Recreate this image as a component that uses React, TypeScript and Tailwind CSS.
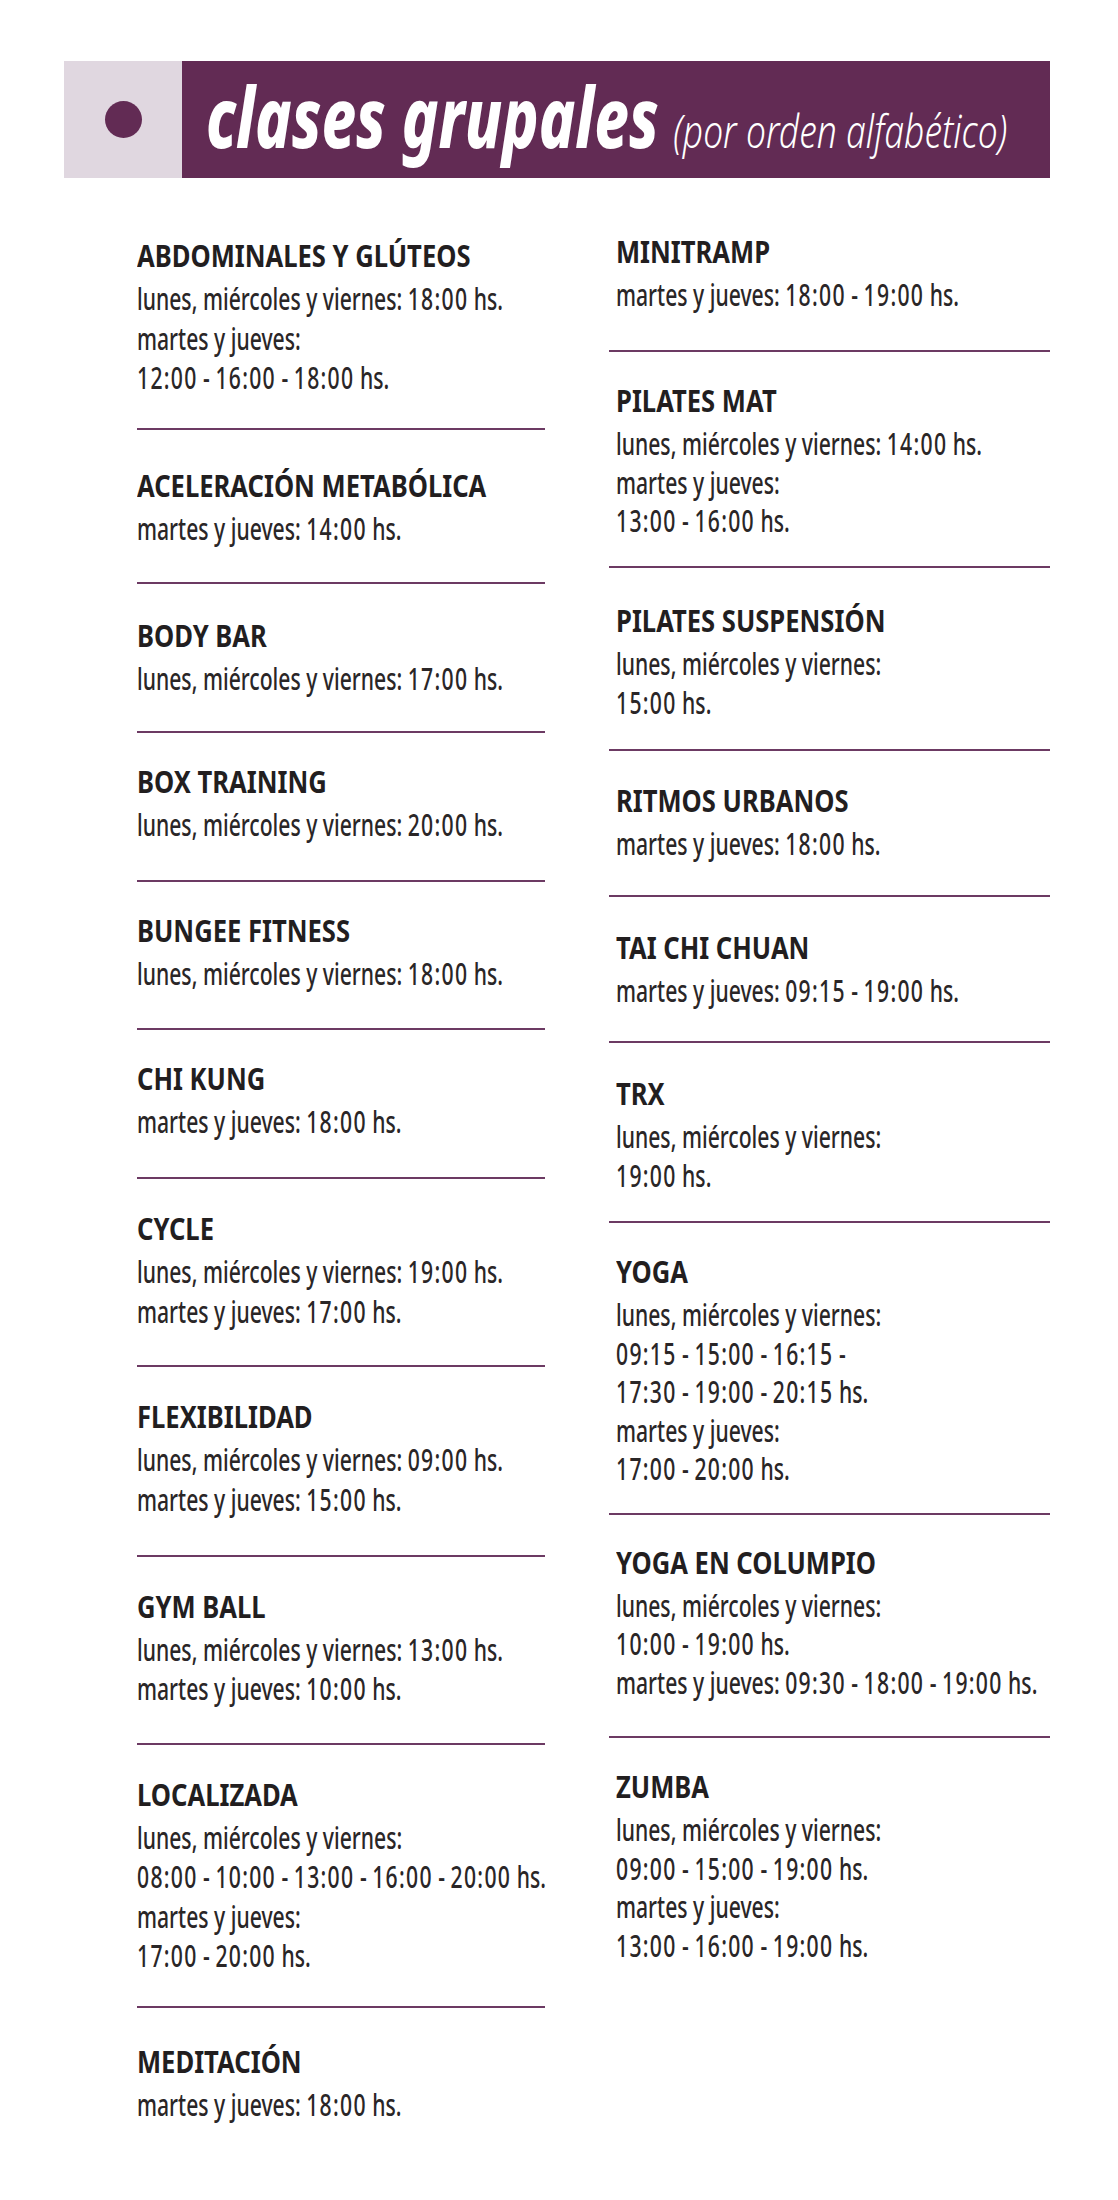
import React from "react";

type Item = { t: string; l: string[]; mt: string; dv?: string };

// left column: titles + schedules, spacing taken from the printed sheet
const leftItems: Item[] = [
  {
    t: "ABDOMINALES Y GLÚTEOS",
    l: ["lunes, miércoles y viernes: 18:00 hs.", "martes y jueves:", "12:00 - 16:00 - 18:00 hs."],
    mt: "mt-[4px]",
    dv: "mt-[30px]",
  },
  { t: "ACELERACIÓN METABÓLICA", l: ["martes y jueves: 14:00 hs."], mt: "mt-[35.5px]", dv: "mt-[33.5px]" },
  { t: "BODY BAR", l: ["lunes, miércoles y viernes: 17:00 hs."], mt: "mt-[31px]", dv: "mt-[32.5px]" },
  { t: "BOX TRAINING", l: ["lunes, miércoles y viernes: 20:00 hs."], mt: "mt-[28px]", dv: "mt-[35px]" },
  { t: "BUNGEE FITNESS", l: ["lunes, miércoles y viernes: 18:00 hs."], mt: "mt-[28px]", dv: "mt-[35px]" },
  { t: "CHI KUNG", l: ["martes y jueves: 18:00 hs."], mt: "mt-[28px]", dv: "mt-[35px]" },
  {
    t: "CYCLE",
    l: ["lunes, miércoles y viernes: 19:00 hs.", "martes y jueves: 17:00 hs."],
    mt: "mt-[29.5px]",
    dv: "mt-[34px]",
  },
  {
    t: "FLEXIBILIDAD",
    l: ["lunes, miércoles y viernes: 09:00 hs.", "martes y jueves: 15:00 hs."],
    mt: "mt-[29px]",
    dv: "mt-[35.5px]",
  },
  {
    t: "GYM BALL",
    l: ["lunes, miércoles y viernes: 13:00 hs.", "martes y jueves: 10:00 hs."],
    mt: "mt-[29px]",
    dv: "mt-[34px]",
  },
  {
    t: "LOCALIZADA",
    l: ["lunes, miércoles y viernes:", "08:00 - 10:00 - 13:00 - 16:00 - 20:00 hs.", "martes y jueves:", "17:00 - 20:00 hs."],
    mt: "mt-[29px]",
    dv: "mt-[30.5px]",
  },
  { t: "MEDITACIÓN", l: ["martes y jueves: 18:00 hs."], mt: "mt-[32.5px]" },
];

const rightItems: Item[] = [
  { t: "MINITRAMP", l: ["martes y jueves: 18:00 - 19:00 hs."], mt: "mt-[0px]", dv: "mt-[36px]" },
  {
    t: "PILATES MAT",
    l: ["lunes, miércoles y viernes: 14:00 hs.", "martes y jueves:", "13:00 - 16:00 hs."],
    mt: "mt-[28.5px]",
    dv: "mt-[26px]",
  },
  {
    t: "PILATES SUSPENSIÓN",
    l: ["lunes, miércoles y viernes:", "15:00 hs."],
    mt: "mt-[32.5px]",
    dv: "mt-[28px]",
  },
  { t: "RITMOS URBANOS", l: ["martes y jueves: 18:00 hs."], mt: "mt-[29px]", dv: "mt-[32.5px]" },
  { t: "TAI CHI CHUAN", l: ["martes y jueves: 09:15 - 19:00 hs."], mt: "mt-[30px]", dv: "mt-[31.5px]" },
  { t: "TRX", l: ["lunes, miércoles y viernes:", "19:00 hs."], mt: "mt-[30px]", dv: "mt-[26.5px]" },
  {
    t: "YOGA",
    l: [
      "lunes, miércoles y viernes:",
      "09:15 - 15:00 - 16:15 -",
      "17:30 - 19:00 - 20:15 hs.",
      "martes y jueves:",
      "17:00 - 20:00 hs.",
    ],
    mt: "mt-[28.5px]",
    dv: "mt-[25px]",
  },
  {
    t: "YOGA EN COLUMPIO",
    l: ["lunes, miércoles y viernes:", "10:00 - 19:00 hs.", "martes y jueves: 09:30 - 18:00 - 19:00 hs."],
    mt: "mt-[27px]",
    dv: "mt-[34.5px]",
  },
  {
    t: "ZUMBA",
    l: ["lunes, miércoles y viernes:", "09:00 - 15:00 - 19:00 hs.", "martes y jueves:", "13:00 - 16:00 - 19:00 hs."],
    mt: "mt-[28.5px]",
  },
];

// las cifras del original son más anchas: se separan un poco
function Schedule({ text }: { text: string }) {
  const parts = text.split(/(\d[\d:]*)/);
  return (
    <>
      {parts.map((p, i) =>
        /^\d/.test(p) ? (
          <span key={i} className="tracking-[1.9px]">
            {p}
          </span>
        ) : (
          <React.Fragment key={i}>{p}</React.Fragment>
        )
      )}
    </>
  );
}

function Column({
  items,
  width,
  textPad,
  lineClass,
  bodyTop,
}: {
  items: Item[];
  width: string;
  textPad: string;
  lineClass: string;
  bodyTop: string;
}) {
  return (
    <div className={`flex flex-col ${width}`}>
      {items.map((it) => (
        <div key={it.t} className={it.mt}>
          <div className={textPad}>
            <h3 className="w-max origin-left scale-x-[0.825] whitespace-nowrap text-[31px] leading-[40px] font-bold text-[#221e1f]">
              {it.t}
            </h3>
            <div className={bodyTop}>
              {it.l.map((line) => (
                <p
                  key={line}
                  className={`w-max origin-left scale-x-[0.682] whitespace-nowrap text-[31px] font-medium text-[#2a2627] ${lineClass}`}
                >
                  <Schedule text={line} />
                </p>
              ))}
            </div>
          </div>
          {it.dv && <div className={`h-[2px] bg-[#6c3a63] ${it.dv}`} />}
        </div>
      ))}
    </div>
  );
}

export default function App() {
  return (
    <div className="min-h-[2200px] w-[1118px] bg-white font-['Noto_Sans','Open_Sans',sans-serif]">
      {/* cabecera */}
      <div className="h-[61px]" />
      <div className="ml-[64px] flex h-[117px] w-[986px]">
        <div className="flex w-[118px] shrink-0 items-center justify-center bg-[#e0d7e0]">
          <div className="h-[37px] w-[37px] rounded-full bg-[#622b54]" />
        </div>
        <div className="min-w-0 flex-1 bg-[#622b54] pl-[24px] pt-[13px] text-white">
          <div className="flex w-max origin-left scale-x-[0.736] items-baseline whitespace-nowrap">
            <span className="text-[83px] leading-[83px] font-extrabold italic">clases grupales</span>
            <span className="ml-[20px] origin-left scale-x-[1.07] text-[45px] leading-[45px] font-light italic">
              (por orden alfabético)
            </span>
          </div>
        </div>
      </div>

      {/* listado */}
      <div className="mt-[53px] flex gap-[64px] pl-[137px]">
        <Column
          items={leftItems}
          width="w-[408px]"
          textPad="pl-0"
          lineClass="leading-[39.5px]"
          bodyTop="mt-[4px]"
        />
        <Column
          items={rightItems}
          width="w-[441px]"
          textPad="pl-[7px]"
          lineClass="leading-[38.5px]"
          bodyTop="mt-[4px]"
        />
      </div>
    </div>
  );
}
